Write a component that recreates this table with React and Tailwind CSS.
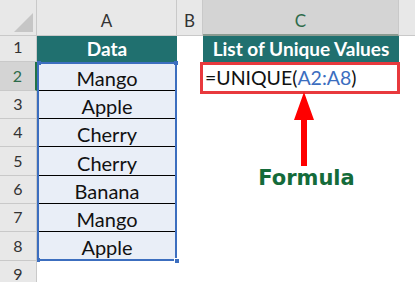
import React from "react";

const data = ["Mango", "Apple", "Cherry", "Cherry", "Banana", "Mango", "Apple"];
const innerH = ["h-[27px]", "h-[28px]", "h-[28px]", "h-[29px]", "h-[28px]", "h-[28px]", "h-[27px]"];
const rowNums = [1, 2, 3, 4, 5, 6, 7, 8, 9];

const font = { fontFamily: "Lato, 'Open Sans', sans-serif" };

export default function App() {
  return (
    <div className="w-[415px] h-[282px] overflow-hidden bg-white" style={font}>
      <div className="grid grid-cols-[37px_140px_26px_196px_1fr] grid-rows-[36px_26px_29px_28px_28px_29px_28px_28px_29px_28px]">
        {/* corner */}
        <div className="col-start-1 row-start-1 bg-[#e8e8e8] border-r border-b border-[#c9c9c9] flex items-end justify-end pr-[3px] pb-[3px]">
          <svg width="19" height="19" viewBox="0 0 19 19">
            <polygon points="19,0 19,19 0,19" fill="#c6c6c6" />
          </svg>
        </div>
        {/* column headers */}
        <div className="col-start-2 row-start-1 bg-[#e8e8e8] border-r border-b border-[#c9c9c9] flex items-end justify-center pb-[4px] text-[17px] leading-[20px] text-[#333]">A</div>
        <div className="col-start-3 row-start-1 bg-[#e8e8e8] border-r border-b border-[#c9c9c9] flex items-end justify-center pb-[4px] text-[17px] leading-[20px] text-[#333]">B</div>
        <div className="col-start-4 row-start-1 bg-[#d4d4d4] border-r border-[#c9c9c9] border-b-2 border-b-[#8a9a90] flex items-end justify-center pb-[3px] text-[17px] leading-[20px] text-[#2e6b4a]">C</div>
        <div className="col-start-5 row-start-1 bg-[#e8e8e8] border-b border-[#c9c9c9]"></div>

        {/* row headers */}
        {rowNums.map((n, i) => (
          <div
            key={n}
            className={
              n === 2
                ? "col-start-1 bg-[#d4d4d4] border-b border-[#c9c9c9] border-r-2 border-r-[#217346] flex items-end justify-center pb-[4px] text-[16px] leading-[20px] text-[#2e6b4a]"
                : "col-start-1 bg-[#e8e8e8] border-b border-r border-[#c9c9c9] flex items-end justify-center pb-[4px] text-[16px] leading-[20px] text-[#333]"
            }
            style={{ gridRowStart: i + 2 }}
          >
            {n}
          </div>
        ))}

        {/* row 1 headers */}
        <div className="col-start-2 row-start-2 bg-[#20706f] flex items-end justify-center pb-[2px] text-white font-bold text-[19px] leading-[22px]">Data</div>
        <div className="col-start-4 row-start-2 bg-[#20706f] flex items-end justify-center pb-[2px] text-white font-bold text-[19px] leading-[22px]">List of Unique Values</div>

        {/* data range with selection */}
        <div className="col-start-2 row-start-3 row-span-7 relative border-2 border-[#3c6ebf] bg-[#e9eef7] flex flex-col">
          {data.map((d, i) => (
            <div
              key={i}
              className={
                innerH[i] +
                " flex items-end justify-center pb-[1px] text-[20px] leading-[22px] text-[#111]" +
                (i < data.length - 1 ? " border-b border-black" : "")
              }
            >
              {d}
            </div>
          ))}
          <span className="absolute -left-[2px] -top-[3px] w-[4px] h-[4px] bg-[#3c6ebf]"></span>
          <span className="absolute -right-[3px] -top-[3px] w-[4px] h-[4px] bg-[#3c6ebf]"></span>
          <span className="absolute -left-[2px] -bottom-[3px] w-[3px] h-[4px] bg-[#3c6ebf]"></span>
          <span className="absolute -right-[5px] -bottom-[5px] w-[6px] h-[6px] bg-[#3c6ebf] border border-white"></span>
        </div>

        {/* formula cell */}
        <div className="col-start-4 row-start-3 -ml-[3px] -mr-[1px] -mb-[3px] border-[3px] border-[#e8393d] flex items-end pl-[2px] pb-[2px] text-[19.5px] leading-[22px] text-[#111] z-10">
          <span>=UNIQUE(</span>
          <span className="text-[#3c6ebf]">A2:A8</span>
          <span>)</span>
        </div>

        {/* arrow and label */}
        <div className="col-start-4 row-start-4 row-span-7 flex flex-col items-center pl-[6px] pt-[1px] z-20">
          <svg width="20" height="74" viewBox="0 0 20 74">
            <path d="M10 0 L20 28 L13 28 L13 74 L7 74 L7 28 L0 28 Z" fill="#ff0000" />
          </svg>
          <div
            className="ml-[5px] text-[21px] leading-[24px] font-bold text-[#146b3a]"
            style={{ fontFamily: "'DejaVu Sans', Verdana, sans-serif" }}
          >
            Formula
          </div>
        </div>
      </div>
    </div>
  );
}
